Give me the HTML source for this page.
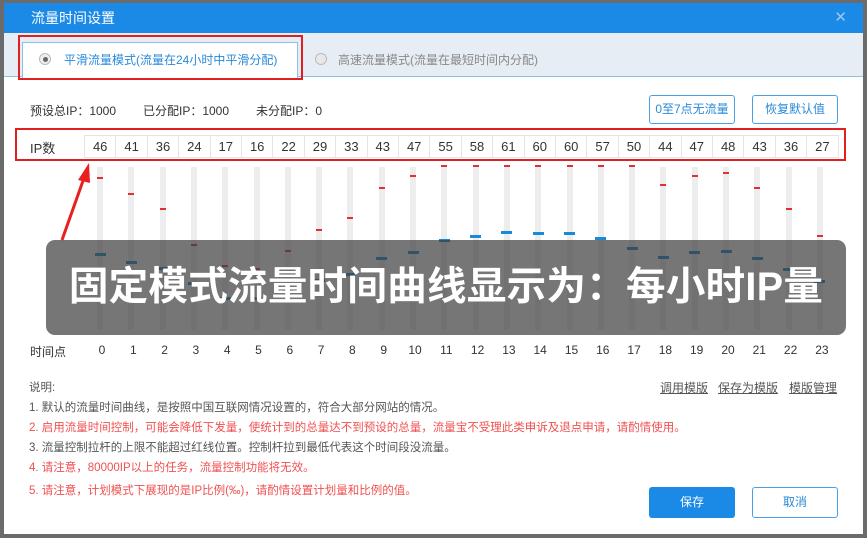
<!DOCTYPE html>
<html><head><meta charset="utf-8"><style>
*{margin:0;padding:0;box-sizing:border-box}
body{width:867px;height:538px;background:#6b6b6b;position:relative;overflow:hidden;font-family:"Liberation Sans","Noto Sans CJK SC",sans-serif;font-size:12px;color:#333}
.title{position:absolute;height:30px;background:#1a8ae6;color:#fff;font-size:14px;line-height:30px;padding-left:27px}
.x{position:absolute;right:16px;top:0;color:#9cc9f0;font-size:15px}
.rad{position:absolute;width:12px;height:12px;border-radius:50%;border:1px solid #bbb;background:#eee}
.abs{position:absolute}
.btn{position:absolute;height:29px;border:1px solid #4aa0e6;border-radius:3px;color:#2a8ad8;text-align:center;line-height:27px;background:#fff}
.redbox{position:absolute;border:2px solid #e02020}
.cell{position:absolute;top:135px;height:23px;border:1px solid #e4e4e4;text-align:center;line-height:22px;font-size:13px;color:#333}
.bar{position:absolute;top:167px;width:6px;height:163px;background:#ededed}
.rm{position:absolute;width:6px;height:2px;background:#e03030}
.bm{position:absolute;width:11px;height:3px;background:#1a8ad8}
.tl{position:absolute;top:343px;width:30px;text-align:center;font-size:12px}
.overlay{position:absolute;left:46px;top:240px;width:800px;height:95px;background:rgba(60,60,60,0.7);border-radius:9px;color:#fff;font-weight:bold;font-size:39.5px;line-height:95px;text-align:center;letter-spacing:0.3px;white-space:nowrap}
.note{position:absolute;left:29px;font-size:11.5px;color:#555;white-space:nowrap}
.red{color:#f05050}
.lnk{position:absolute;top:379px;font-size:12px;color:#555;text-decoration:underline}
</style></head><body>
<div class="title abs" style="left:4px;top:3px;width:859px">流量时间设置<span class="x">✕</span></div>
<div class="abs" style="left:4px;top:33px;width:859px;height:501px;background:#fff"></div>
<div class="abs" style="left:4px;top:33px;width:859px;height:44px;background:#e6edf4;border-bottom:1px solid #8fc0ea"></div>
<div class="abs" style="left:22px;top:42px;width:276px;height:36px;background:#fff;border:1px solid #8fc0ea;border-bottom:none"></div>
<div class="rad" style="left:39px;top:53px"></div><div class="abs" style="left:43px;top:57px;width:5px;height:5px;border-radius:50%;background:#666"></div>
<div class="abs" style="left:64px;top:51px;color:#2a8ad8">平滑流量模式(流量在24小时中平滑分配)</div>
<div class="rad" style="left:315px;top:53px;background:#e8e8e8"></div>
<div class="abs" style="left:338px;top:51px;color:#888">高速流量模式(流量在最短时间内分配)</div>
<div class="redbox" style="left:18px;top:35px;width:285px;height:45px"></div>

<div class="abs" style="left:30px;top:102px">预设总IP：1000</div>
<div class="abs" style="left:143px;top:102px">已分配IP：1000</div>
<div class="abs" style="left:256px;top:102px">未分配IP：0</div>
<div class="btn" style="left:649px;top:95px;width:86px">0至7点无流量</div>
<div class="btn" style="left:752px;top:95px;width:86px">恢复默认值</div>

<div class="abs" style="left:30px;top:138px;font-size:13px">IP数</div>
<div id="cells"></div>
<div class="redbox" style="left:15px;top:128px;width:831px;height:33px"></div>

<div id="sl"></div>
<svg class="abs" style="left:0;top:0" width="867" height="538"><path d="M62 240 L84 178" stroke="#e82020" stroke-width="3" fill="none"/><path d="M89 163 L78 180 L90 183 Z" fill="#e82020"/></svg>
<div class="overlay">固定模式流量时间曲线显示为：每小时IP量</div>
<div class="abs" style="left:30px;top:343px">时间点</div>

<div class="note" style="top:379px">说明:</div>
<div class="note" style="top:399px">1. 默认的流量时间曲线，是按照中国互联网情况设置的，符合大部分网站的情况。</div>
<div class="note red" style="top:419px">2. 启用流量时间控制，可能会降低下发量，使统计到的总量达不到预设的总量，流量宝不受理此类申诉及退点申请，请酌情使用。</div>
<div class="note" style="top:439px">3. 流量控制拉杆的上限不能超过红线位置。控制杆拉到最低代表这个时间段没流量。</div>
<div class="note red" style="top:459px">4. 请注意，80000IP以上的任务，流量控制功能将无效。</div>
<div class="note red" style="top:482px">5. 请注意，计划模式下展现的是IP比例(‰)，请酌情设置计划量和比例的值。</div>
<div class="lnk" style="left:660px">调用模版</div>
<div class="lnk" style="left:718px">保存为模版</div>
<div class="lnk" style="left:789px">模版管理</div>
<div class="btn" style="left:649px;top:487px;width:86px;height:31px;line-height:31px;background:#1a8ae6;color:#fff;border:none">保存</div>
<div class="btn" style="left:752px;top:487px;width:86px;height:31px;line-height:29px">取消</div>
<script>
var v=[46,41,36,24,17,16,22,29,33,43,47,55,58,61,60,60,57,50,44,47,48,43,36,27];
var r=[177,193,208,244,265,268,250,229,217,187,175,165,165,165,165,165,165,165,184,175,172,187,208,235];
var b=[253,261,267,282,297,297,290,279,273,257,251,239,235,231,232,232,237,247,256,251,250,257,268,280];
var h='';for(var i=0;i<24;i++){h+='<div class="cell" style="left:'+(84+i*31.4)+'px;width:32.4px">'+v[i]+'</div>';}
document.getElementById('cells').innerHTML=h;
h='';for(var i=0;i<24;i++){var x=100+i*31.3;
h+='<div class="bar" style="left:'+(x-3)+'px"></div><div class="rm" style="left:'+(x-3)+'px;top:'+r[i]+'px"></div><div class="bm" style="left:'+(x-5.5)+'px;top:'+b[i]+'px"></div><div class="tl" style="left:'+(x-13)+'px">'+i+'</div>';}
document.getElementById('sl').innerHTML=h;
</script>
</body></html>
